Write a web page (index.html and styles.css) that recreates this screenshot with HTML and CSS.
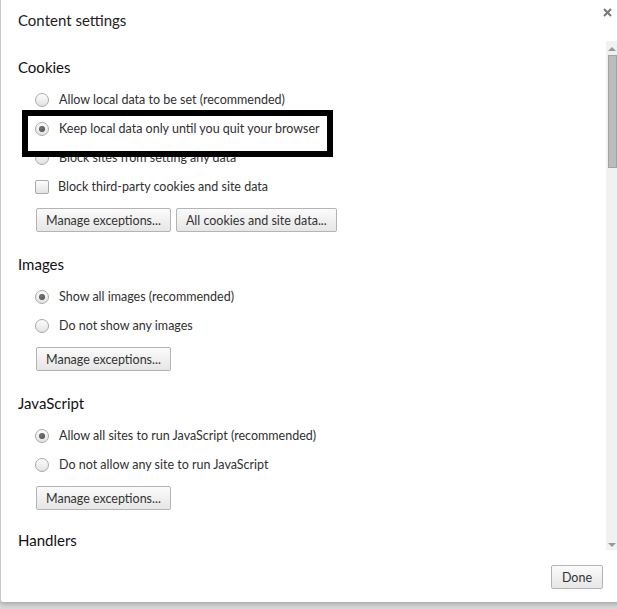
FILE: index.html
```html
<!DOCTYPE html>
<html>
<head>
<meta charset="utf-8">
<link rel="stylesheet" href="styles.css">
</head>
<body>
<div class="dialog">
  <div class="header">
    <h1 class="title">Content settings</h1>
    <svg class="close" width="9" height="9" viewBox="0 0 9 9"><path d="M1 1L8 8M8 1L1 8" stroke="#777" stroke-width="2" fill="none"/></svg>
  </div>
  <div class="body">
    <div class="content">
      <section class="section">
        <h2 class="heading">Cookies</h2>
        <div class="rows">
          <label class="row"><span class="radio"></span><span class="label">Allow local data to be set (recommended)</span></label>
          <label class="row"><span class="radio checked"></span><span class="label">Keep local data only until you quit your browser</span></label>
          <label class="row"><span class="radio"></span><span class="label">Block sites from setting any data</span></label>
          <label class="row"><span class="checkbox"></span><span class="label">Block third-party cookies and site data</span></label>
        </div>
        <div class="buttons">
          <span class="btn">Manage exceptions...</span>
          <span class="btn">All cookies and site data...</span>
        </div>
        <div class="highlight"></div>
      </section>
      <section class="section">
        <h2 class="heading">Images</h2>
        <div class="rows">
          <label class="row"><span class="radio checked"></span><span class="label">Show all images (recommended)</span></label>
          <label class="row"><span class="radio"></span><span class="label">Do not show any images</span></label>
        </div>
        <div class="buttons">
          <span class="btn">Manage exceptions...</span>
        </div>
      </section>
      <section class="section">
        <h2 class="heading">JavaScript</h2>
        <div class="rows">
          <label class="row"><span class="radio checked"></span><span class="label">Allow all sites to run JavaScript (recommended)</span></label>
          <label class="row"><span class="radio"></span><span class="label">Do not allow any site to run JavaScript</span></label>
        </div>
        <div class="buttons">
          <span class="btn">Manage exceptions...</span>
        </div>
      </section>
      <section class="section">
        <h2 class="heading last">Handlers</h2>
      </section>
    </div>
    <div class="scrollbar">
      <span class="arrow up"></span>
      <span class="thumb"></span>
      <span class="track-fill"></span>
      <span class="arrow down"></span>
    </div>
  </div>
  <div class="footer">
    <span class="btn done">Done</span>
  </div>
</div>
</body>
</html>
```
FILE: styles.css
```css
html, body {
  margin: 0;
  padding: 0;
}
body {
  background: #d9d9d9;
  font-family: "Lato", "Open Sans", sans-serif;
  color: #303030;
  width: 617px;
  height: 609px;
  overflow: hidden;
}
.dialog {
  width: 640px;
  height: 602px;
  background: #fff;
  border-left: 1px solid #c8c8c8;
  border-radius: 0 0 3px 3px;
  box-shadow: 0 2px 5px rgba(0,0,0,0.25);
  display: flex;
  flex-direction: column;
  position: relative;
}
.header {
  height: 41px;
  display: flex;
  justify-content: space-between;
  align-items: flex-start;
  width: 616px;
  box-sizing: border-box;
  padding-left: 17px;
}
.title {
  margin: 10px 0 0 0;
  font-size: 15px;
  line-height: 20px;
  font-weight: normal;
  color: #222;
}
.close {
  margin: 8px 5px 0 0;
  display: block;
}
.body {
  height: 509px;
  display: flex;
  width: 616px;
}
.content {
  flex: 1;
  overflow: hidden;
  padding-left: 17px;
  padding-top: 16px;
}
.section {
  position: relative;
  margin-bottom: 22px;
}
.heading {
  margin: 0;
  font-size: 15px;
  line-height: 20px;
  font-weight: normal;
  color: #111;
}
.heading.last {
  line-height: 17px;
}
.rows {
  margin-top: 8px;
  padding-left: 17px;
}
.row {
  height: 29px;
  display: flex;
  align-items: center;
  font-size: 12.5px;
}
.radio {
  width: 12px;
  height: 12px;
  border: 1px solid #aaa;
  border-radius: 50%;
  background: linear-gradient(#fdfdfd, #e2e2e2);
  display: flex;
  align-items: center;
  justify-content: center;
  margin-right: 10px;
  flex: none;
}
.radio.checked::after {
  content: "";
  width: 6px;
  height: 6px;
  border-radius: 50%;
  background: radial-gradient(circle at 40% 40%, #777, #444);
}
.checkbox {
  width: 12px;
  height: 12px;
  border: 1px solid #aaa;
  border-radius: 2px;
  background: linear-gradient(#fdfdfd, #e2e2e2);
  margin-right: 9px;
  flex: none;
}
.label {
  color: #303030;
}
.buttons {
  margin-top: 7px;
  padding-left: 18px;
  display: flex;
  gap: 5px;
}
.btn {
  display: inline-flex;
  align-items: center;
  justify-content: center;
  height: 24px;
  box-sizing: border-box;
  padding: 0 9px;
  border: 1px solid #b4b4b4;
  border-radius: 2px;
  background: linear-gradient(#fbfbfb, #e6e6e6);
  font-size: 12.5px;
  color: #333;
}
.highlight {
  position: absolute;
  left: 4px;
  top: 53px;
  width: 311px;
  height: 47px;
  box-sizing: border-box;
  border: 6px solid #000;
}
.scrollbar {
  width: 11px;
  background: #f1f1f1;
  display: flex;
  flex-direction: column;
  align-items: flex-end;
  flex: none;
}
.arrow {
  width: 0;
  height: 0;
  border-left: 4px solid transparent;
  border-right: 4px solid transparent;
  align-self: center;
}
.arrow.up {
  border-bottom: 4px solid #999;
  margin-top: 6px;
  margin-bottom: 4px;
}
.arrow.down {
  border-top: 4px solid #999;
  margin-bottom: 3px;
}
.thumb {
  width: 9px;
  height: 113px;
  box-sizing: border-box;
  background: #bcbcbc;
  border: 1px solid #a2a2a2;
}
.track-fill {
  flex: 1;
}
.footer {
  flex: 1;
  width: 616px;
  box-sizing: border-box;
  display: flex;
  justify-content: flex-end;
  align-items: flex-start;
  padding: 15px 14px 0 0;
}
.done {
  width: 52px;
  padding: 0;
}
```
